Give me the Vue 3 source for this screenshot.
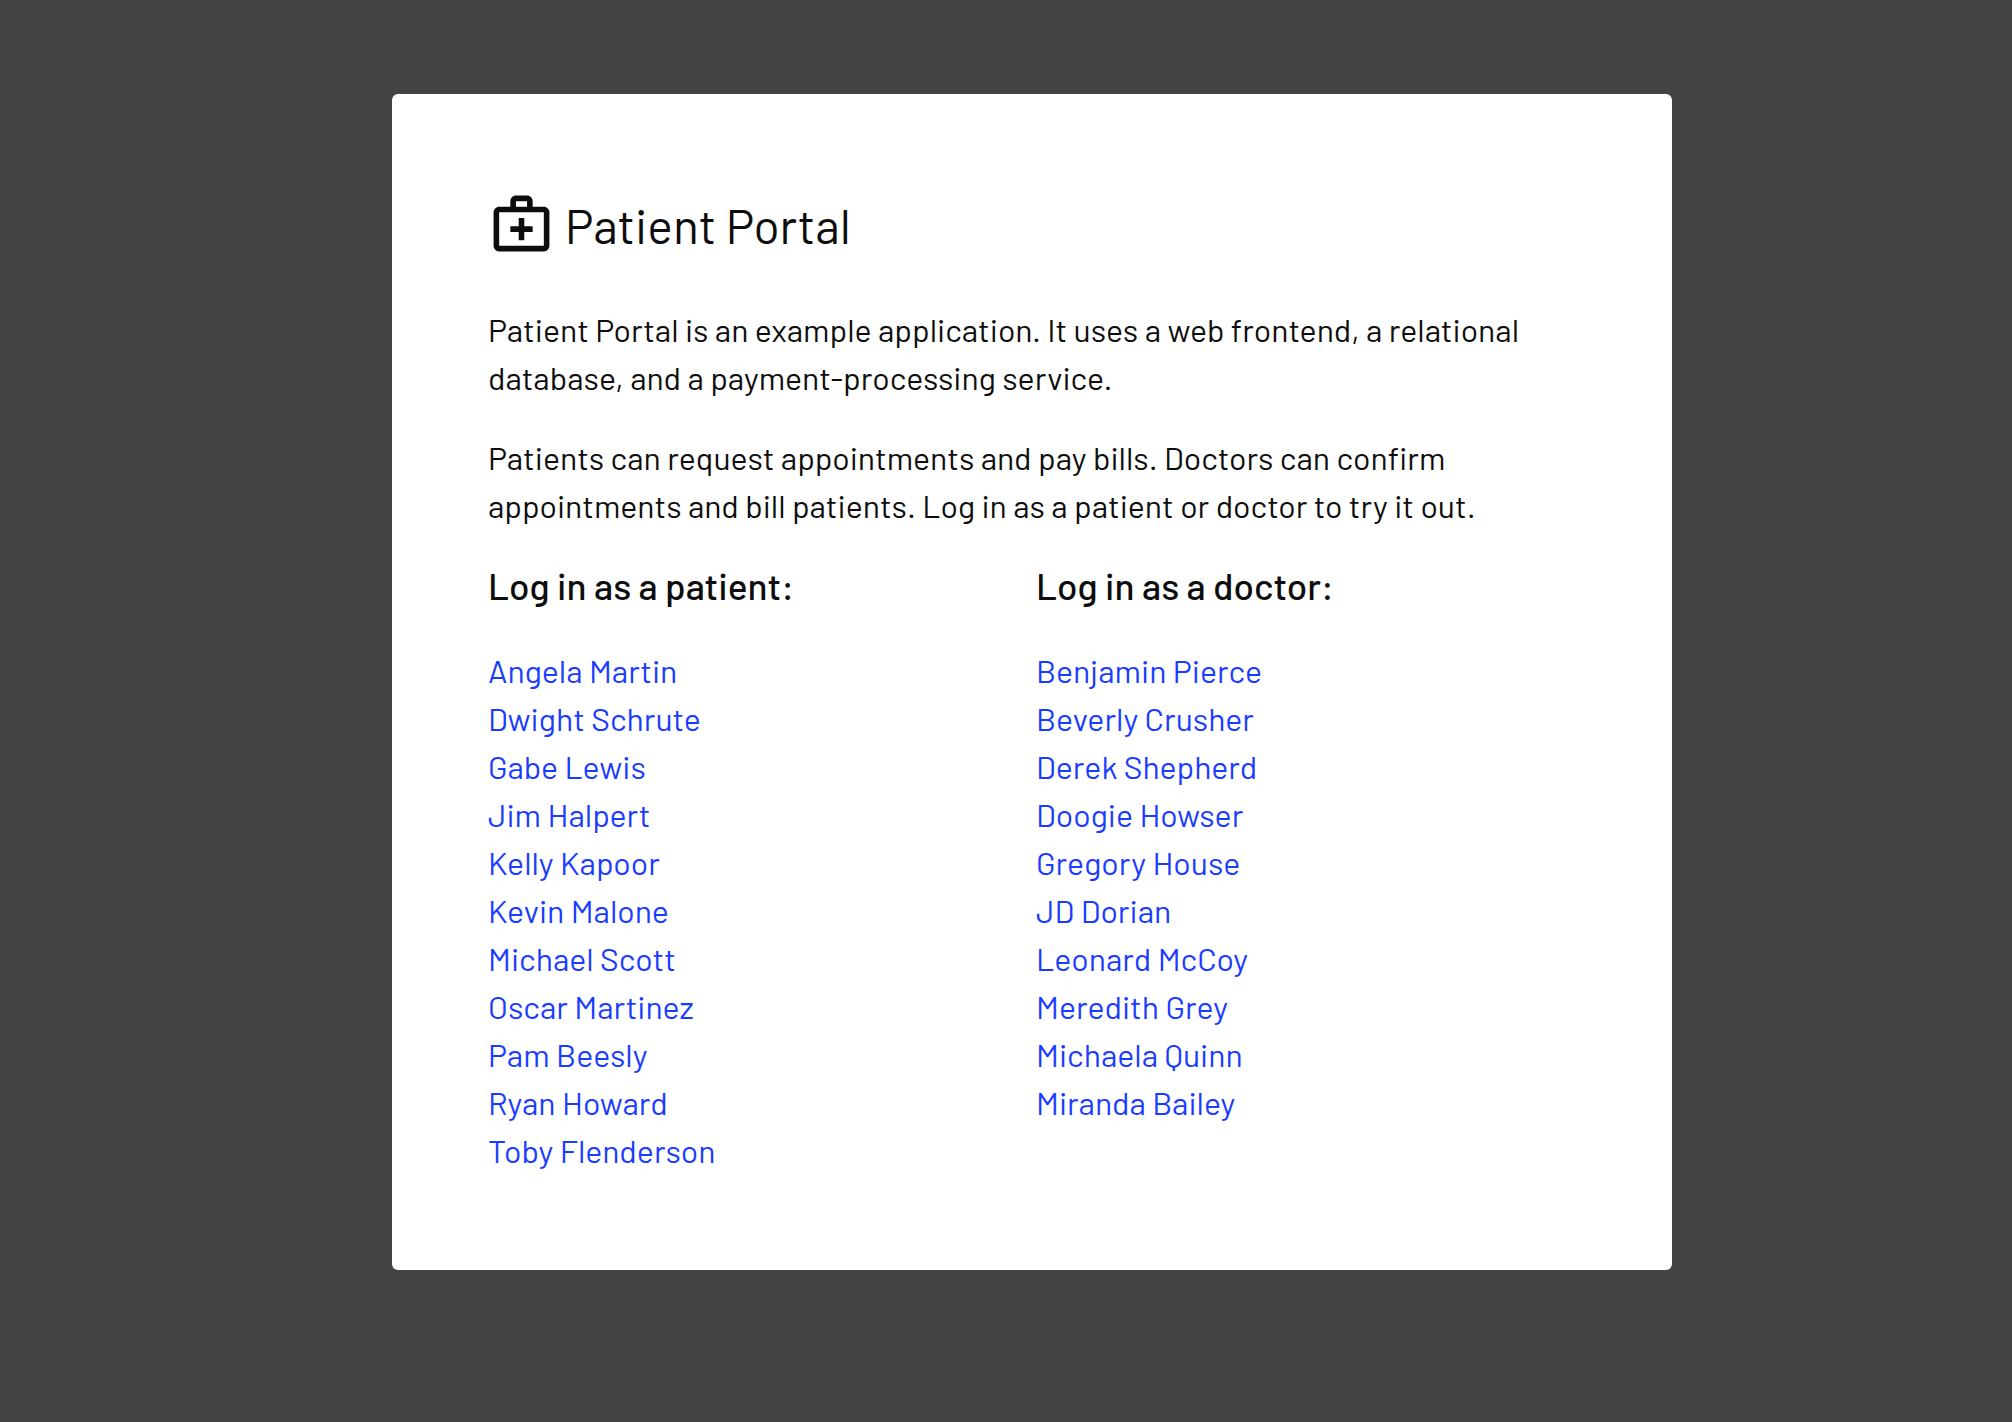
<script setup>
const groups = [
  {
    id: 'patients',
    title: 'Log in as a patient:',
    people: [
      'Angela Martin',
      'Dwight Schrute',
      'Gabe Lewis',
      'Jim Halpert',
      'Kelly Kapoor',
      'Kevin Malone',
      'Michael Scott',
      'Oscar Martinez',
      'Pam Beesly',
      'Ryan Howard',
      'Toby Flenderson',
    ],
  },
  {
    id: 'doctors',
    title: 'Log in as a doctor:',
    people: [
      'Benjamin Pierce',
      'Beverly Crusher',
      'Derek Shepherd',
      'Doogie Howser',
      'Gregory House',
      'JD Dorian',
      'Leonard McCoy',
      'Meredith Grey',
      'Michaela Quinn',
      'Miranda Bailey',
    ],
  },
]
</script>

<template>
  <div class="page">
    <main class="card">
      <header class="brand">
        <svg class="logo" viewBox="0 0 24 24" aria-hidden="true">
          <path
            d="M20 6h-4V4c0-1.100-.9-2-2-2h-4c-1.100 0-2 .9-2 2v2H4c-1.100 0-2 .9-2 2v12c0 1.100.9 2 2 2h16c1.100 0 2-.9 2-2V8c0-1.100-.9-2-2-2zM10 4h4v2h-4V4zm10 16H4V8h16v12z"
          />
          <path d="M13 10h-2v3H8v2h3v3h2v-3h3v-2h-3z" />
        </svg>
        <h1>Patient Portal</h1>
      </header>
      <p>
        Patient Portal is an example application. It uses a web frontend, a relational
        database, and a payment-processing service.
      </p>
      <p>
        Patients can request appointments and pay bills. Doctors can confirm
        appointments and bill patients. Log in as a patient or doctor to try it out.
      </p>
      <div class="columns">
        <section v-for="group in groups" :key="group.id" :aria-labelledby="group.id">
          <h2 :id="group.id">{{ group.title }}</h2>
          <ul>
            <li v-for="name in group.people" :key="name">
              <a href="#">{{ name }}</a>
            </li>
          </ul>
        </section>
      </div>
    </main>
  </div>
</template>

<style>
body {
  margin: 0;
  background: #444;
}
</style>

<style scoped>
.page {
  padding: 94px 0 96px 52px;
  color: #0d0d0d;
  font-family: Barlow, Roboto, sans-serif;
  font-size: 32px;
  line-height: 48px;
}

.card {
  box-sizing: border-box;
  max-width: 1280px;
  margin: 0 auto;
  padding: 96px;
  border-radius: 6px;
  background: #fff;
}

.brand {
  display: flex;
  align-items: flex-end;
  gap: 10px;
  margin-bottom: 48px;
}

.logo {
  width: 67px;
  height: 67px;
  fill: currentColor;
}

h1 {
  margin: 0;
  font-size: 48px;
  font-weight: 400;
  line-height: 64px;
}

p {
  margin: 0 0 32px;
}

.columns {
  display: grid;
  grid-template-columns: 1fr 1fr;
  gap: 8px;
}

h2 {
  margin: 0 0 37px;
  font-size: 37px;
  font-weight: 500;
}

ul {
  margin: 0;
  padding: 0;
  list-style: none;
}

a {
  color: #1a3cff;
  text-decoration: none;
}
</style>
